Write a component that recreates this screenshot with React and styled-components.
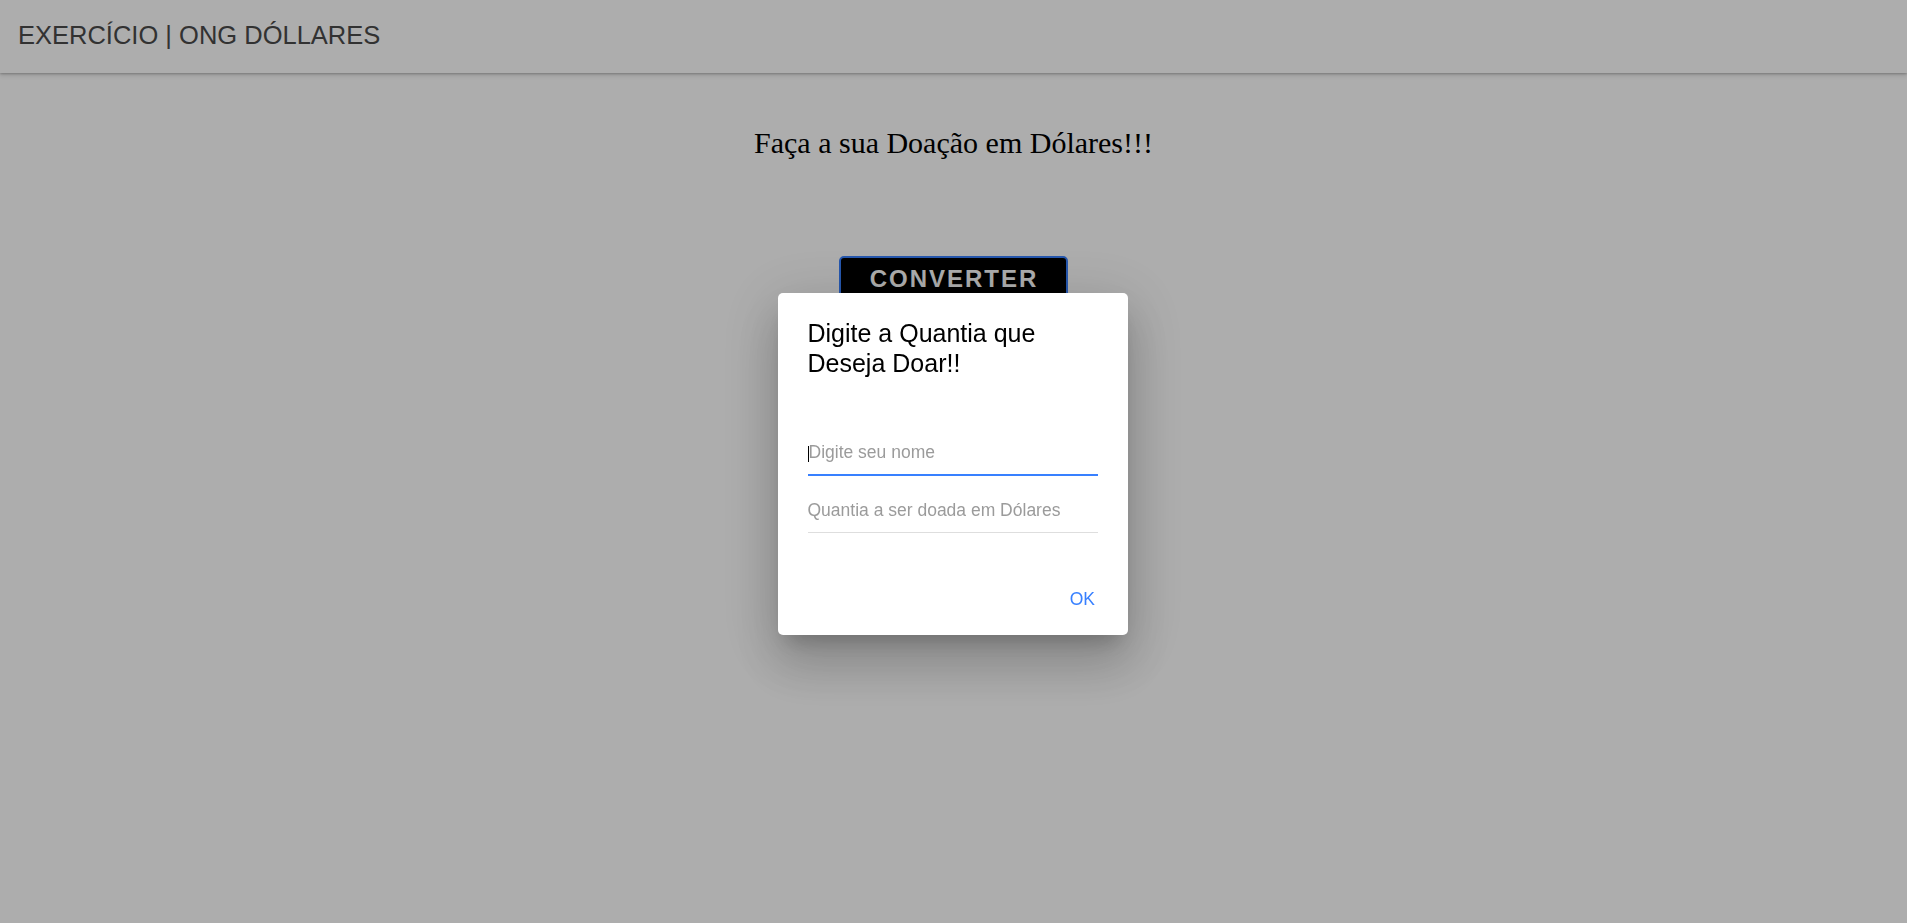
import React from "react";
import styled, { createGlobalStyle } from "styled-components";

const GlobalStyle = createGlobalStyle`
  html, body {
    margin: 0;
    padding: 0;
    background: #ffffff;
  }
  body {
    font-family: "Liberation Sans", Arial, sans-serif;
    overflow: hidden;
  }
  * { box-sizing: border-box; }
`;

const Page = styled.div`
  min-height: 100vh;
  display: flex;
  flex-direction: column;
`;

const Header = styled.header`
  height: 73px;
  display: flex;
  align-items: center;
  padding: 0 0 2px 18px;
  background: #ffffff;
  box-shadow: 0 1px 2px rgba(0, 0, 0, 0.22), 0 3px 4px rgba(0, 0, 0, 0.1);
  position: relative;
  z-index: 1;
`;

const HeaderTitle = styled.h1`
  margin: 0;
  font-family: "Liberation Sans", Arial, sans-serif;
  font-size: 25.5px;
  font-weight: normal;
  color: #4b4b4b;
`;

const Main = styled.main`
  display: flex;
  flex-direction: column;
  align-items: center;
`;

const Heading = styled.h2`
  margin: 53px 0 0;
  font-family: "Liberation Serif", "Times New Roman", serif;
  font-size: 30px;
  line-height: 33px;
  font-weight: normal;
  color: #000000;
`;

const ConvertButton = styled.button`
  margin-top: 97px;
  width: 229px;
  height: 46px;
  background: #000000;
  border: 2px solid #3880ff;
  border-radius: 5px;
  color: #ffffff;
  font-family: "Liberation Sans", Arial, sans-serif;
  font-size: 24px;
  font-weight: bold;
  letter-spacing: 2px;
  padding: 0 0 0 1px;
  cursor: pointer;
`;

const Backdrop = styled.div`
  position: fixed;
  inset: 0;
  background: rgba(0, 0, 0, 0.32);
  display: flex;
  align-items: center;
  justify-content: center;
  padding-top: 5px;
  padding-right: 2px;
  z-index: 10;
`;

const Dialog = styled.div`
  width: 350px;
  background: #ffffff;
  border-radius: 5px;
  box-shadow: 0 14px 19px -9px rgba(0, 0, 0, 0.2),
    0 30px 48px 4px rgba(0, 0, 0, 0.14), 0 11px 58px 10px rgba(0, 0, 0, 0.12);
  display: flex;
  flex-direction: column;
`;

const DialogHead = styled.div`
  padding: 25px 29px 19px 30px;
`;

const DialogTitle = styled.h2`
  margin: 0;
  max-width: 260px;
  font-family: "Liberation Sans", Arial, sans-serif;
  font-size: 25px;
  line-height: 30px;
  font-weight: normal;
  color: #000000;
`;

const InputGroup = styled.div`
  display: flex;
  flex-direction: column;
  gap: 12px;
  padding: 33px 30px 26px;
`;

const Field = styled.div`
  position: relative;

  &::before {
    content: "";
    display: ${(p) => (p.$caret ? "block" : "none")};
    position: absolute;
    left: 0;
    top: 16px;
    width: 1px;
    height: 16px;
    background: #000000;
  }
`;

const TextInput = styled.input`
  display: block;
  width: 100%;
  padding: 12px 0 12px ${(p) => (p.$active ? "1px" : "0")};
  border: 0;
  border-bottom: ${(p) => (p.$active ? "2px solid #3880ff" : "1px solid #dedede")};
  background: transparent;
  font-family: "Liberation Sans", Arial, sans-serif;
  font-size: 17.5px;
  line-height: 20px;
  color: #000000;
  caret-color: transparent;
  outline: none;

  &::placeholder {
    color: #9b9b9b;
    opacity: 1;
  }
`;

const ButtonGroup = styled.div`
  display: flex;
  justify-content: flex-end;
  padding: 20px 10px 16px 30px;
`;

const DialogButton = styled.button`
  margin-right: 10px;
  padding: 10px 12.5px;
  border: 0;
  background: transparent;
  color: #3880ff;
  font-family: "Liberation Sans", Arial, sans-serif;
  font-size: 17.5px;
  line-height: 20px;
  cursor: pointer;
`;

export default function App() {
  return (
    <>
      <GlobalStyle />
      <Page>
        <Header>
          <HeaderTitle>EXERCÍCIO | ONG DÓLLARES</HeaderTitle>
        </Header>
        <Main>
          <Heading>Faça a sua Doação em Dólares!!!</Heading>
          <ConvertButton>CONVERTER</ConvertButton>
        </Main>
      </Page>
      <Backdrop>
        <Dialog role="dialog">
          <DialogHead>
            <DialogTitle>Digite a Quantia que Deseja Doar!!</DialogTitle>
          </DialogHead>
          <InputGroup>
            <Field $caret>
              <TextInput $active placeholder="Digite seu nome" />
            </Field>
            <Field>
              <TextInput placeholder="Quantia a ser doada em Dólares" />
            </Field>
          </InputGroup>
          <ButtonGroup>
            <DialogButton>OK</DialogButton>
          </ButtonGroup>
        </Dialog>
      </Backdrop>
    </>
  );
}
